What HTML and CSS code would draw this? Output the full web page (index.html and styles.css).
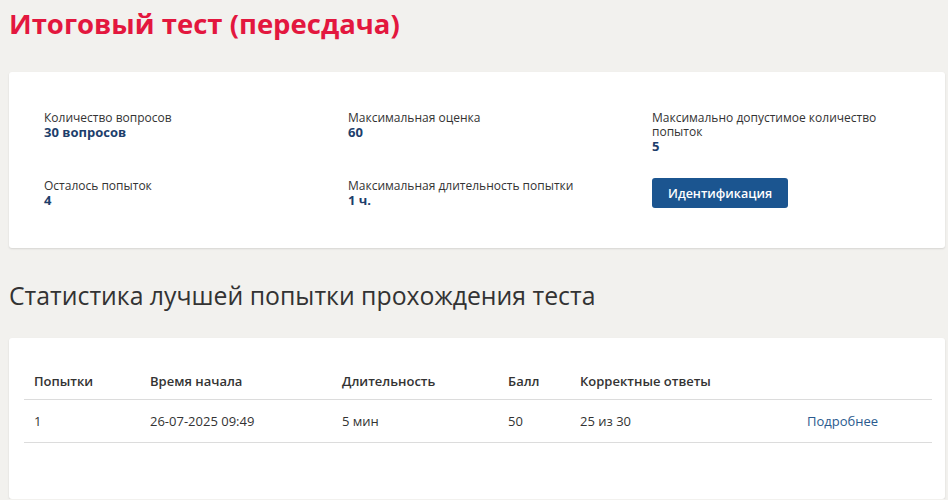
FILE: index.html
```html
<!DOCTYPE html>
<html lang="ru">
<head>
    <meta charset="UTF-8">
    <meta name="viewport" content="width=device-width, initial-scale=1.0">
    <title>Итоговый тест</title>
    <link rel="stylesheet" href="styles.css">
</head>
<body>
    <div class="page">
        <h1 class="page-title">Итоговый тест (пересдача)</h1>

        <!-- Общая информация о тесте -->
        <div class="card info-card">
            <div class="info-grid">
                <div class="info-item">
                    <div class="info-label">Количество вопросов</div>
                    <div class="info-value">30 вопросов</div>
                </div>
                <div class="info-item">
                    <div class="info-label">Максимальная оценка</div>
                    <div class="info-value">60</div>
                </div>
                <div class="info-item">
                    <div class="info-label narrow">Максимально допустимое количество попыток</div>
                    <div class="info-value">5</div>
                </div>
                <div class="info-item">
                    <div class="info-label">Осталось попыток</div>
                    <div class="info-value">4</div>
                </div>
                <div class="info-item">
                    <div class="info-label">Максимальная длительность попытки</div>
                    <div class="info-value">1 ч.</div>
                </div>
                <div class="info-item">
                    <button class="ident-button" type="button">Идентификация</button>
                </div>
            </div>
        </div>

        <h2 class="section-title">Статистика лучшей попытки прохождения теста</h2>

        <div class="card table-card">
            <table class="stats-table">
                <thead>
                    <tr>
                        <th class="col-try">Попытки</th>
                        <th class="col-start">Время начала</th>
                        <th class="col-dur">Длительность</th>
                        <th class="col-score">Балл</th>
                        <th class="col-correct">Корректные ответы</th>
                        <th></th>
                    </tr>
                </thead>
                <tbody>
                    <tr>
                        <td>1</td>
                        <td>26-07-2025 09:49</td>
                        <td>5 мин</td>
                        <td>50</td>
                        <td>25 из 30</td>
                        <td><a class="more-link" href="#">Подробнее</a></td>
                    </tr>
                </tbody>
            </table>
        </div>
    </div>
</body>
</html>
```

FILE: styles.css
```css
body {
    margin: 0;
    padding: 0;
    background-color: #f2f1ee;
    font-family: "Open Sans", Arial, sans-serif;
    color: #333;
}

.page {
    padding: 0 3px 0 9px;
}

.page-title {
    margin: 0;
    padding-top: 4px;
    color: #e3173e;
    font-size: 27.5px;
    font-weight: 700;
    line-height: 40px;
}

.card {
    background-color: #fff;
    border-radius: 3px;
    box-shadow: 0 1px 2px rgba(0, 0, 0, 0.12);
}

/* Блок с информацией */
.info-card {
    margin-top: 28px;
    padding: 39px 0 40px 35px;
}

.info-grid {
    display: grid;
    grid-template-columns: 304px 304px 1fr;
    row-gap: 26px;
}

.info-label {
    font-size: 12px;
    line-height: 14px;
    color: #333;
}

.info-label.narrow {
    max-width: 225px;
}

.info-value {
    font-size: 13px;
    font-weight: 700;
    line-height: 14px;
    color: #1d3e6b;
}

.ident-button {
    height: 30px;
    margin-top: -1px;
    padding: 0 16px;
    background-color: #1b5590;
    border: none;
    border-radius: 3px;
    color: #fff;
    font-family: "Open Sans", Arial, sans-serif;
    font-size: 12.5px;
    font-weight: 600;
    cursor: pointer;
}

.section-title {
    margin: 32px 0 0;
    font-size: 24.8px;
    font-weight: 400;
    line-height: 30px;
    color: #333;
}

/* Таблица статистики */
.table-card {
    margin-top: 28px;
    padding: 28px 13px 56px 15px;
}

.stats-table {
    width: 100%;
    border-collapse: collapse;
    font-size: 13px;
}

.stats-table th {
    text-align: left;
    font-weight: 600;
    padding: 6px 10px 9px;
    border-bottom: 1px solid #dcdcdc;
}

.stats-table td {
    padding: 12px 10px 12px;
    border-bottom: 1px solid #dcdcdc;
}

.col-try { width: 96px; }
.col-start { width: 172px; }
.col-dur { width: 146px; }
.col-score { width: 52px; }
.col-correct { width: 207px; }

.more-link {
    color: #2a5a8e;
    text-decoration: none;
}
```
